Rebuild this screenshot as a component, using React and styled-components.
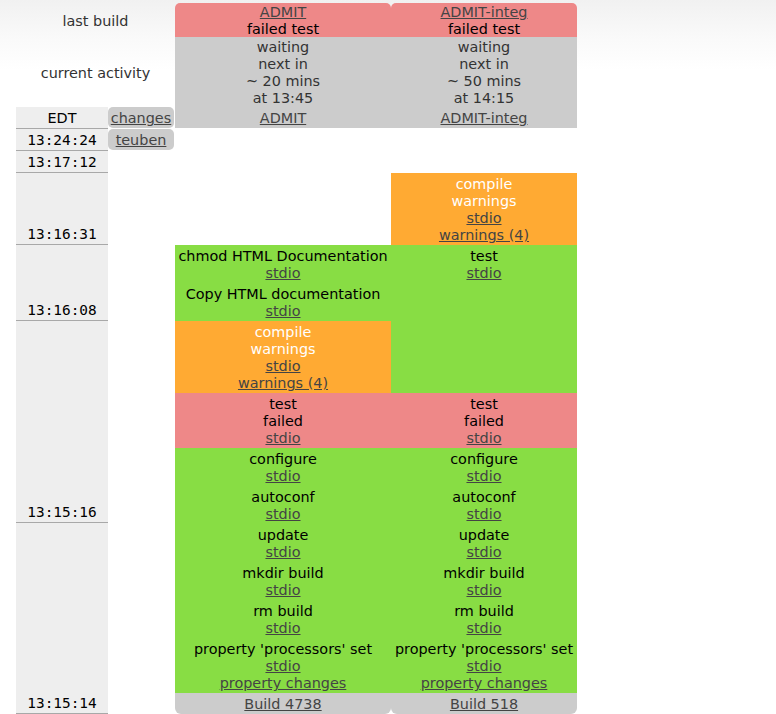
import React from "react";
import styled, { createGlobalStyle } from "styled-components";

const GlobalStyle = createGlobalStyle`
  html, body {
    margin: 0;
    padding: 0;
  }
  body {
    background: #fff linear-gradient(to bottom, #f1f1f1 0, #fafafa 40px, #ffffff 70px) no-repeat;
    font-family: "DejaVu Sans", Verdana, sans-serif;
    font-size: 14.4px;
    line-height: 17px;
    color: #000;
  }
`;

const colors = {
  success: "#88dd44",
  failure: "#ee8888",
  warnings: "#ffaa33",
  idle: "#cccccc",
};

const Waterfall = styled.div`
  display: grid;
  grid-template-columns: 92px 67px 216px 186px;
  grid-template-rows: 34px 70px 22px 22px 22px 72px 38px 38px 72px 55px 75px 170px 21px;
  padding: 3px 0 0 16px;
`;

const Link = styled.a`
  color: #444;
  text-decoration: underline;
  cursor: pointer;
`;

const Label = styled.div`
  grid-column: 1 / 3;
  grid-row: ${p => p.$row};
  display: flex;
  align-items: center;
  justify-content: center;
  padding-top: 2px;
  color: #333;
`;

const LastBuild = styled.div`
  grid-column: ${p => p.$col};
  grid-row: 1;
  background: ${p => colors[p.$status]};
  border-radius: 5px 5px 0 0;
  text-align: center;
  padding-top: 1px;
  overflow: hidden;
`;

const Activity = styled.div`
  grid-column: ${p => p.$col};
  grid-row: 2;
  background: ${colors.idle};
  color: #333;
  text-align: center;
  padding: 2px 0 0;
`;

const BuilderName = styled.div`
  grid-column: ${p => p.$col};
  grid-row: 3;
  background: ${colors.idle};
  text-align: center;
  padding: 3px 0 1px;
  margin-bottom: 1px;
`;

const TimeCell = styled.div`
  grid-column: 1;
  grid-row: ${p => p.$row};
  background: #eeeeee;
  border-bottom: 1px solid #a8a8a8;
  display: flex;
  align-items: ${p => (p.$header ? "center" : "flex-end")};
  justify-content: center;
  padding-top: ${p => (p.$header ? "2px" : "0")};
  padding-bottom: ${p => (p.$header ? "0" : "1px")};
  font-family: ${p => (p.$header ? '"DejaVu Sans", Verdana, sans-serif' : '"DejaVu Sans Mono", monospace')};
`;

const ChangeCell = styled.div`
  grid-column: 2;
  grid-row: ${p => p.$row};
  background: ${colors.idle};
  border-radius: 5px;
  margin: 0 1px 1px 0;
  padding-top: 2px;
  display: flex;
  align-items: center;
  justify-content: center;
`;

const StepCell = styled.div`
  grid-column: ${p => p.$col};
  grid-row: ${p => p.$row};
  background: ${p => colors[p.$status]};
  color: ${p => (p.$status === "warnings" ? "#fff" : "#000")};
  display: flex;
  flex-direction: column;
`;

const Step = styled.div`
  padding: 3px 0 1px;
  text-align: center;
  white-space: nowrap;
`;

const Line = styled.div``;

const BuildCell = styled.div`
  grid-column: ${p => p.$col};
  grid-row: 13;
  background: ${colors.idle};
  border-radius: 0 0 6px 6px;
  text-align: center;
  padding: 3px 0 1px;
`;

const setupSteps = [
  { name: "configure", links: ["stdio"] },
  { name: "autoconf", links: ["stdio"] },
  { name: "update", links: ["stdio"] },
  { name: "mkdir build", links: ["stdio"] },
  { name: "rm build", links: ["stdio"] },
  { name: "property 'processors' set", links: ["stdio", "property changes"] },
];

const StepContent = ({ lines = [], links = [] }) => (
  <Step>
    {lines.map(l => (
      <Line key={l}>{l}</Line>
    ))}
    {links.map(l => (
      <Line key={l}>
        <Link>{l}</Link>
      </Line>
    ))}
  </Step>
);

const builders = [
  { col: 3, name: "ADMIT", mins: "20", at: "13:45", build: "Build 4738" },
  { col: 4, name: "ADMIT-integ", mins: "50", at: "14:15", build: "Build 518" },
];

const times = [
  { row: "4", t: "13:24:24" },
  { row: "5", t: "13:17:12" },
  { row: "6", t: "13:16:31" },
  { row: "7 / 9", t: "13:16:08" },
  { row: "9 / 12", t: "13:15:16" },
  { row: "12 / 14", t: "13:15:14" },
];

export default function App() {
  return (
    <>
      <GlobalStyle />
      <Waterfall>
        <Label $row={1}>last build</Label>
        <Label $row={2}>current activity</Label>

        {builders.map(b => (
          <React.Fragment key={b.name}>
            <LastBuild $col={b.col} $status="failure">
              <Line><Link>{b.name}</Link></Line>
              <Line>failed test</Line>
            </LastBuild>
            <Activity $col={b.col}>
              <Line>waiting</Line>
              <Line>next in</Line>
              <Line>~ {b.mins} mins</Line>
              <Line>at {b.at}</Line>
            </Activity>
            <BuilderName $col={b.col}>
              <Link>{b.name}</Link>
            </BuilderName>
          </React.Fragment>
        ))}

        <TimeCell $row="3" $header>EDT</TimeCell>
        {times.map(t => (
          <TimeCell key={t.t} $row={t.row}>{t.t}</TimeCell>
        ))}

        <ChangeCell $row={3}><Link>changes</Link></ChangeCell>
        <ChangeCell $row={4}><Link>teuben</Link></ChangeCell>

        {/* ADMIT */}
        <StepCell $col={3} $row="7" $status="success">
          <StepContent lines={["chmod HTML Documentation"]} links={["stdio"]} />
        </StepCell>
        <StepCell $col={3} $row="8" $status="success">
          <StepContent lines={["Copy HTML documentation"]} links={["stdio"]} />
        </StepCell>
        <StepCell $col={3} $row="9" $status="warnings">
          <StepContent lines={["compile", "warnings"]} links={["stdio", "warnings (4)"]} />
        </StepCell>

        {/* ADMIT-integ */}
        <StepCell $col={4} $row="6" $status="warnings">
          <StepContent lines={["compile", "warnings"]} links={["stdio", "warnings (4)"]} />
        </StepCell>
        <StepCell $col={4} $row="7 / 10" $status="success">
          <StepContent lines={["test"]} links={["stdio"]} />
        </StepCell>

        {builders.map(b => (
          <React.Fragment key={b.build}>
            <StepCell $col={b.col} $row="10" $status="failure">
              <StepContent lines={["test", "failed"]} links={["stdio"]} />
            </StepCell>
            <StepCell $col={b.col} $row="11 / 13" $status="success">
              {setupSteps.map(s => (
                <StepContent key={s.name} lines={[s.name]} links={s.links} />
              ))}
            </StepCell>
            <BuildCell $col={b.col}>
              <Link>{b.build}</Link>
            </BuildCell>
          </React.Fragment>
        ))}
      </Waterfall>
    </>
  );
}
